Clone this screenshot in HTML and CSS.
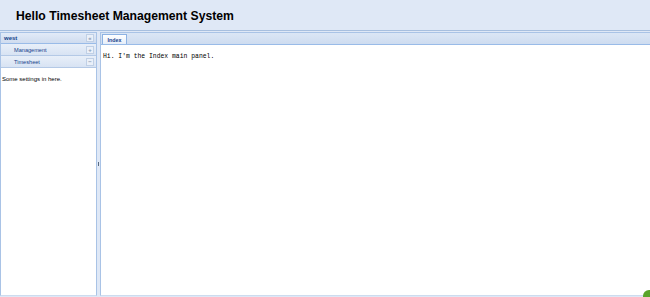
FILE: index.html
```html
<!DOCTYPE html>
<html lang="en">
<head>
  <meta charset="UTF-8">
  <title>Hello Timesheet Management System</title>
  <link rel="stylesheet" href="styles.css">
</head>
<body>
  <div class="viewport">
    <div class="north">
      <h1 class="app-title">Hello Timesheet Management System</h1>
    </div>
    <div class="main">
      <div class="west">
        <div class="panel-head">
          <span class="panel-title">west</span>
          <span class="tool">&laquo;</span>
        </div>
        <div class="acc-item">
          <span class="acc-title">Management</span>
          <span class="tool">+</span>
        </div>
        <div class="acc-item">
          <span class="acc-title">Timesheet</span>
          <span class="tool">&minus;</span>
        </div>
        <div class="west-body">Some settings in here.</div>
      </div>
      <div class="splitter"><span class="mini"></span></div>
      <div class="center">
        <div class="tabstrip">
          <span class="tab">Index</span>
        </div>
        <div class="tab-body">Hi. I'm the Index main panel.</div>
      </div>
    </div>
    <span class="corner-dot"></span>
  </div>
</body>
</html>
```

FILE: styles.css
```css
html, body {
  margin: 0;
  padding: 0;
  height: 100%;
  background: #fff;
  font-family: 'Liberation Sans', Arial, sans-serif;
  overflow: hidden;
}
.viewport {
  height: 297px;
  display: flex;
  flex-direction: column;
  position: relative;
}
.north {
  height: 30px;
  background: #dfe8f6;
  border-bottom: 1px solid #a7bfdf;
  display: flex;
  align-items: center;
  padding-left: 16px;
}
.app-title {
  margin: 0;
  font-size: 12.2px;
  font-weight: bold;
  color: #000;
  padding-top: 2px;
}
.main {
  flex: 1;
  display: flex;
  background: #dfe8f6;
  padding: 1px 0;
}
.west {
  width: 95px;
  border: 1px solid #a9c3e6;
  border-bottom: 1px solid #cddcef;
  background: #fff;
  display: flex;
  flex-direction: column;
}
.panel-head {
  height: 10px;
  display: flex;
  align-items: center;
  justify-content: space-between;
  padding: 0 2px 0 3px;
  background: linear-gradient(#e2ebf8, #cfdcef);
  border-bottom: 1px solid #99bbe8;
}
.panel-title {
  font-size: 6px;
  font-weight: bold;
  color: #15428b;
}
.tool {
  width: 6px;
  height: 6px;
  border: 1px solid #c0d0e6;
  background: #eaf0f9;
  color: #8a9bb5;
  font-size: 6px;
  line-height: 6px;
  text-align: center;
  font-weight: bold;
}
.acc-item {
  height: 11px;
  display: flex;
  align-items: center;
  justify-content: space-between;
  padding: 0 2px 0 13px;
  background: linear-gradient(#e8eff9, #d8e3f3);
  border-bottom: 1px solid #b4c9e6;
}
.acc-title {
  font-size: 5.6px;
  color: #15428b;
}
.west-body {
  padding: 8px 0 0 1px;
  font-size: 6px;
  color: #000;
}
.splitter {
  width: 3px;
  display: flex;
  align-items: center;
  justify-content: center;
}
.mini {
  width: 1px;
  height: 4px;
  background: #5a6a80;
}
.center {
  flex: 1;
  border: 1px solid #a9c3e6;
  border-bottom: 1px solid #cddcef;
  border-right: none;
  background: #fff;
  display: flex;
  flex-direction: column;
}
.tabstrip {
  height: 11px;
  display: flex;
  align-items: flex-end;
  padding-left: 1px;
  background: linear-gradient(#dbe6f5, #cedcf0);
  border-bottom: 1px solid #99bbe8;
}
.tab {
  height: 9px;
  width: 23px;
  display: flex;
  align-items: center;
  justify-content: center;
  background: linear-gradient(#fff, #e6eef9);
  border: 1px solid #8db2e3;
  border-bottom: none;
  font-size: 5.3px;
  font-weight: bold;
  color: #15428b;
}
.tab-body {
  padding: 8px 0 0 2px;
  font-family: 'Liberation Mono', 'Courier New', monospace;
  font-size: 6.4px;
  color: #000;
}
.corner-dot {
  position: absolute;
  right: -5px;
  bottom: -5px;
  width: 12px;
  height: 12px;
  border-radius: 50%;
  background: #5aa42a;
}
```
